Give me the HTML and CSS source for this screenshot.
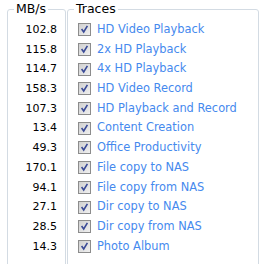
FILE: index.html
```html
<!DOCTYPE html>
<html lang="en">
<head>
  <meta charset="UTF-8">
  <title>Traces</title>
  <link rel="stylesheet" href="styles.css">
</head>
<body>
  <main class="panel">
    <fieldset class="group group--speed">
      <legend>MB/s</legend>
      <div class="row">102.8</div>
      <div class="row">115.8</div>
      <div class="row">114.7</div>
      <div class="row">158.3</div>
      <div class="row">107.3</div>
      <div class="row">13.4</div>
      <div class="row">49.3</div>
      <div class="row">170.1</div>
      <div class="row">94.1</div>
      <div class="row">27.1</div>
      <div class="row">28.5</div>
      <div class="row">14.3</div>
    </fieldset>
    <fieldset class="group group--traces">
      <legend>Traces</legend>
      <label class="row trace"><span class="check"></span>HD Video Playback</label>
      <label class="row trace"><span class="check"></span>2x HD Playback</label>
      <label class="row trace"><span class="check"></span>4x HD Playback</label>
      <label class="row trace"><span class="check"></span>HD Video Record</label>
      <label class="row trace"><span class="check"></span>HD Playback and Record</label>
      <label class="row trace"><span class="check"></span>Content Creation</label>
      <label class="row trace"><span class="check"></span>Office Productivity</label>
      <label class="row trace"><span class="check"></span>File copy to NAS</label>
      <label class="row trace"><span class="check"></span>File copy from NAS</label>
      <label class="row trace"><span class="check"></span>Dir copy to NAS</label>
      <label class="row trace"><span class="check"></span>Dir copy from NAS</label>
      <label class="row trace"><span class="check"></span>Photo Album</label>
    </fieldset>
  </main>
</body>
</html>
```
FILE: styles.css
```css
* {
  margin: 0;
  padding: 0;
  box-sizing: border-box;
}
html, body {
  height: 264px;
  overflow: hidden;
}
body {
  background: #fff;
  font-family: "DejaVu Sans", Verdana, sans-serif;
  font-size: 11px;
  color: #000;
}
.panel {
  display: flex;
  gap: 1px;
  padding: 1px 0 0 7px;
}
.group {
  border: 1px solid #d3dbe3;
  border-radius: 3px;
  padding: 3px 0 0;
  height: 272px;
}
.group legend {
  margin-left: 6px;
  padding: 0 2px;
  line-height: 16px;
  font-size: 12.5px;
}
.group--speed {
  width: 59px;
}
.group--speed .row {
  text-align: right;
  padding-right: 8px;
}
.group--traces {
  width: 192px;
}
.row {
  height: 19.7px;
  line-height: 19.7px;
}
.trace {
  display: flex;
  align-items: center;
  padding-left: 10px;
  font-size: 11.4px;
  color: #4589ee;
}
/* checked box, classic style */
.check {
  flex: none;
  width: 13px;
  height: 13px;
  margin-right: 6px;
  border: 1px solid #8c8c8c;
  background:
    url("data:image/svg+xml,%3Csvg xmlns='http://www.w3.org/2000/svg' viewBox='0 0 11 11'%3E%3Cpath d='M2.6 5 L4.7 8 L8.4 1.8' fill='none' stroke='%233a4a96' stroke-width='1.6'/%3E%3C/svg%3E") center / 11px 11px no-repeat,
    linear-gradient(135deg, #d0d0d0, #f0f0f0);
}
```
